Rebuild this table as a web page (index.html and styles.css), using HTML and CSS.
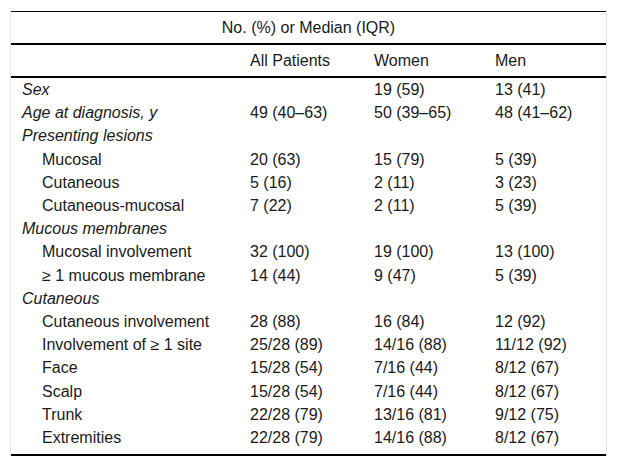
FILE: index.html
```html
<!DOCTYPE html>
<html>
<head>
<meta charset="utf-8">
<link rel="stylesheet" href="styles.css">
</head>
<body>
<div class="frame">
<table class="data">
<colgroup>
<col class="c1"><col class="c2"><col class="c3"><col class="c4">
</colgroup>
<thead>
<tr class="h1"><th colspan="4" class="center">No. (%) or Median (IQR)</th></tr>
<tr class="h2"><th></th><th>All Patients</th><th>Women</th><th>Men</th></tr>
</thead>
<tbody>
<tr><td class="grp">Sex</td><td></td><td>19 (59)</td><td>13 (41)</td></tr>
<tr><td class="grp">Age at diagnosis, y</td><td>49 (40–63)</td><td>50 (39–65)</td><td>48 (41–62)</td></tr>
<tr><td class="grp">Presenting lesions</td><td></td><td></td><td></td></tr>
<tr><td class="sub">Mucosal</td><td>20 (63)</td><td>15 (79)</td><td>5 (39)</td></tr>
<tr><td class="sub">Cutaneous</td><td>5 (16)</td><td>2 (11)</td><td>3 (23)</td></tr>
<tr><td class="sub">Cutaneous-mucosal</td><td>7 (22)</td><td>2 (11)</td><td>5 (39)</td></tr>
<tr><td class="grp">Mucous membranes</td><td></td><td></td><td></td></tr>
<tr><td class="sub">Mucosal involvement</td><td>32 (100)</td><td>19 (100)</td><td>13 (100)</td></tr>
<tr><td class="sub">≥ 1 mucous membrane</td><td>14 (44)</td><td>9 (47)</td><td>5 (39)</td></tr>
<tr><td class="grp">Cutaneous</td><td></td><td></td><td></td></tr>
<tr><td class="sub">Cutaneous involvement</td><td>28 (88)</td><td>16 (84)</td><td>12 (92)</td></tr>
<tr><td class="sub">Involvement of ≥ 1 site</td><td>25/28 (89)</td><td>14/16 (88)</td><td>11/12 (92)</td></tr>
<tr><td class="sub">Face</td><td>15/28 (54)</td><td>7/16 (44)</td><td>8/12 (67)</td></tr>
<tr><td class="sub">Scalp</td><td>15/28 (54)</td><td>7/16 (44)</td><td>8/12 (67)</td></tr>
<tr><td class="sub">Trunk</td><td>22/28 (79)</td><td>13/16 (81)</td><td>9/12 (75)</td></tr>
<tr class="last"><td class="sub">Extremities</td><td>22/28 (79)</td><td>14/16 (88)</td><td>8/12 (67)</td></tr>
</tbody>
</table>
</div>
</body>
</html>
```
FILE: styles.css
```css
html, body {
  margin: 0;
  padding: 0;
  background: #fff;
}
body {
  font-family: "Liberation Sans", Arial, Helvetica, sans-serif;
  font-size: 16px;
  color: #1a1a1a;
}
.frame {
  margin: 10px 0 0 10px;
  width: 595px;
  border-left: 1px solid #e6e6e6;
  border-right: 1px solid #e6e6e6;
  padding-top: 1px;
}
.data {
  width: 595px;
  table-layout: fixed;
  border-collapse: separate;
  border-spacing: 0;
}
.c1 { width: 228px; }
.c2 { width: 124px; }
.c3 { width: 121px; }
.c4 { width: 122px; }
.data th {
  font-weight: normal;
  text-align: left;
  padding: 0 0 0 11px;
  height: 31px;
  line-height: 19px;
  vertical-align: middle;
  white-space: nowrap;
}
.data th.center {
  text-align: center;
  padding: 0;
}
.h1 th {
  border-top: 1px solid #000;
  border-bottom: 2px solid #000;
}
.h2 th {
  border-bottom: 2px solid #000;
}
.data td {
  padding: 2px 0 2px 11px;
  line-height: 19.2px;
  white-space: nowrap;
  vertical-align: top;
}
.data td.grp {
  font-style: italic;
}
.data td.sub {
  padding-left: 31px;
}
.last td {
  padding-bottom: 7px;
  border-bottom: 2px solid #000;
}
```
